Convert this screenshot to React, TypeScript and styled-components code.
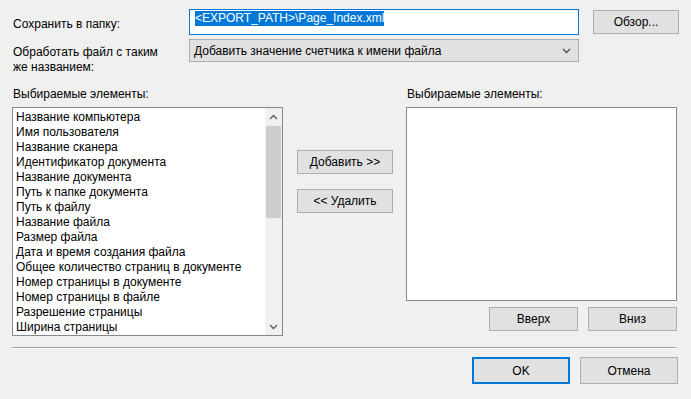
import React from 'react';
import styled, { createGlobalStyle } from 'styled-components';

const GlobalStyle = createGlobalStyle`
  html, body {
    margin: 0;
    padding: 0;
    background: #f0f0f0;
  }
  * {
    box-sizing: border-box;
  }
`;

const Dialog = styled.div`
  width: 691px;
  height: 399px;
  background: #f0f0f0;
  font-family: "Liberation Sans", Arial, sans-serif;
  font-size: 12px;
  color: #000;
  padding: 9px 12px 0 12px;
  display: flex;
  flex-direction: column;
`;

const FormGrid = styled.div`
  display: grid;
  grid-template-columns: 177px 390px 100px;
  row-gap: 4px;
  align-items: start;
`;

const Label = styled.div<{ $top?: number }>`
  padding-left: 1px;
  padding-top: ${({ $top }) => $top ?? 0}px;
  line-height: 15px;
`;

const PathInput = styled.div`
  height: 26px;
  background: #fff;
  border: 1px solid #0078d7;
  padding: 1px 5px;
`;

const Selected = styled.span`
  background: #0078d7;
  color: #fff;
  line-height: 15px;
  display: inline-block;
`;

const Button = styled.button<{ $w: number; $h?: number; $default?: boolean }>`
  width: ${({ $w }) => $w}px;
  height: ${({ $h }) => $h ?? 24}px;
  background: #e1e1e1;
  border: ${({ $default }) => ($default ? '2px solid #0078d7' : '1px solid #adadad')};
  font-family: inherit;
  font-size: 12px;
  color: #000;
  padding: 0;
  margin: 0;
`;

const BrowseButton = styled(Button)`
  margin: 1px 0 0 14px;
`;

const Combo = styled.div`
  height: 23px;
  background: #e1e1e1;
  border: 1px solid #adadad;
  display: flex;
  align-items: center;
  justify-content: space-between;
  padding: 0 7px 0 4px;
`;

const Lists = styled.div`
  display: flex;
  margin-top: 12px;
`;

const Column = styled.div<{ $w: number }>`
  width: ${({ $w }) => $w}px;
  display: flex;
  flex-direction: column;
`;

const ListLabel = styled.div`
  line-height: 15px;
  padding-left: 1px;
  margin-bottom: 5px;
`;

const ListBox = styled.div<{ $h: number }>`
  height: ${({ $h }) => $h}px;
  background: #fff;
  border: 1px solid #828790;
  display: flex;
`;

const Items = styled.ul`
  flex: 1;
  list-style: none;
  margin: 0;
  padding: 2px 0 0 3px;
  overflow: hidden;
`;

const Item = styled.li`
  line-height: 15px;
  white-space: nowrap;
`;

const ScrollBar = styled.div`
  width: 17px;
  background: #f0f0f0;
  display: flex;
  flex-direction: column;
`;

const ScrollArrow = styled.div`
  height: 17px;
  display: flex;
  align-items: center;
  justify-content: center;
`;

const ScrollTrack = styled.div`
  flex: 1;
  padding: 1px 1px 0 1px;
`;

const Thumb = styled.div`
  height: 92px;
  background: #cdcdcd;
`;

const MoveButtons = styled.div`
  width: 123px;
  padding: 63px 0 0 14px;
  display: flex;
  flex-direction: column;
  gap: 15px;
`;

const OrderButtons = styled.div`
  display: flex;
  justify-content: flex-end;
  gap: 10px;
  margin-top: 6px;
`;

const Separator = styled.hr`
  width: 664px;
  margin: 11px 0 0 0;
  border: none;
  border-top: 1px solid #a0a0a0;
  border-bottom: 1px solid #fff;
  height: 0;
`;

const Footer = styled.div`
  display: flex;
  justify-content: flex-end;
  gap: 10px;
  margin-top: 8px;
  padding-right: 1px;
`;

const Chevron = ({ up, color = '#606060' }: { up?: boolean; color?: string }) => (
  <svg width="9" height="6" viewBox="0 0 9 6">
    <path
      d={up ? 'M1 5 L4.5 1.5 L8 5' : 'M1 1 L4.5 4.5 L8 1'}
      fill="none"
      stroke={color}
      strokeWidth="1.4"
    />
  </svg>
);

const fields = [
  'Название компьютера',
  'Имя пользователя',
  'Название сканера',
  'Идентификатор документа',
  'Название документа',
  'Путь к папке документа',
  'Путь к файлу',
  'Название файла',
  'Размер файла',
  'Дата и время создания файла',
  'Общее количество страниц в документе',
  'Номер страницы в документе',
  'Номер страницы в файле',
  'Разрешение страницы',
  'Ширина страницы',
];

export default function App() {
  return (
    <>
      <GlobalStyle />
      <Dialog>
        <FormGrid>
          <Label $top={8}>Сохранить в папку:</Label>
          <PathInput>
            <Selected>&lt;EXPORT_PATH&gt;\Page_Index.xml</Selected>
          </PathInput>
          <BrowseButton $w={86} $h={24}>Обзор...</BrowseButton>

          <Label $top={6}>
            Обработать файл с таким
            <br />
            же названием:
          </Label>
          <Combo>
            <span>Добавить значение счетчика к имени файла</span>
            <Chevron color="#555" />
          </Combo>
        </FormGrid>

        <Lists>
          <Column $w={271}>
            <ListLabel>Выбираемые элементы:</ListLabel>
            <ListBox $h={229}>
              <Items>
                {fields.map((f) => (
                  <Item key={f}>{f}</Item>
                ))}
              </Items>
              <ScrollBar>
                <ScrollArrow>
                  <Chevron up />
                </ScrollArrow>
                <ScrollTrack>
                  <Thumb />
                </ScrollTrack>
                <ScrollArrow>
                  <Chevron />
                </ScrollArrow>
              </ScrollBar>
            </ListBox>
          </Column>

          <MoveButtons>
            <Button $w={96}>Добавить &gt;&gt;</Button>
            <Button $w={96}>&lt;&lt; Удалить</Button>
          </MoveButtons>

          <Column $w={271}>
            <ListLabel>Выбираемые элементы:</ListLabel>
            <ListBox $h={194} />
            <OrderButtons>
              <Button $w={89}>Вверх</Button>
              <Button $w={89}>Вниз</Button>
            </OrderButtons>
          </Column>
        </Lists>

        <Separator />

        <Footer>
          <Button $w={98} $h={27} $default>
            OK
          </Button>
          <Button $w={98} $h={27}>
            Отмена
          </Button>
        </Footer>
      </Dialog>
    </>
  );
}
